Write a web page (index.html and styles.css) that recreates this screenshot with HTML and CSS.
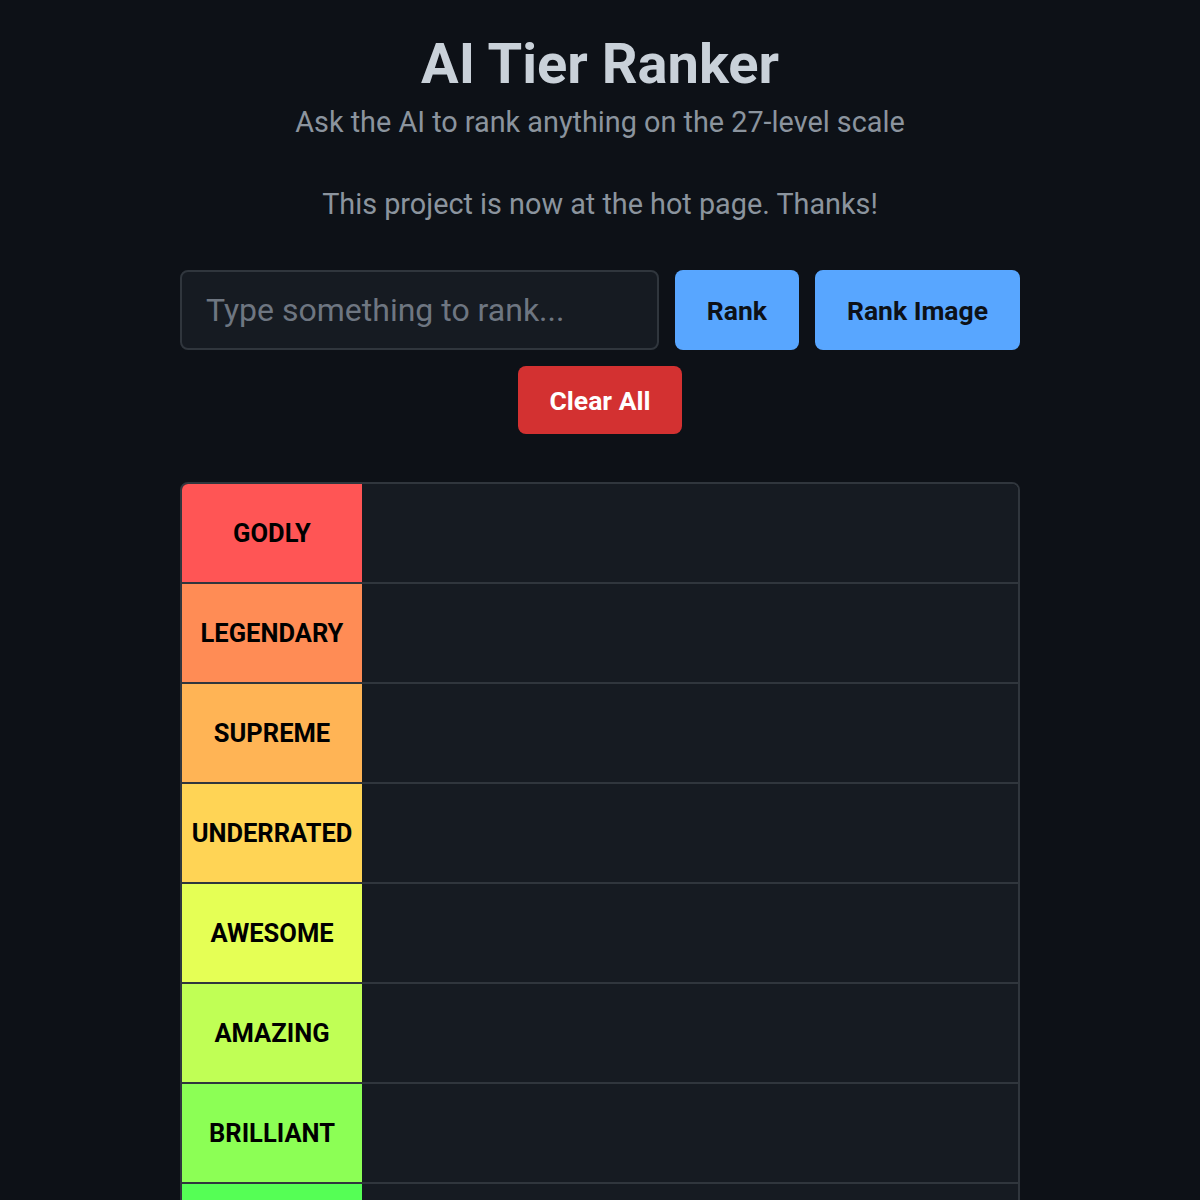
FILE: index.html
```html
<!DOCTYPE html>
<html>
<head>
    <title>AI Tier Ranker</title>
    <link rel="stylesheet" href="styles.css">
</head>
<body>
    <div class="container">
        <header class="header">
            <h1>AI Tier Ranker</h1>
            <p class="subtitle">Ask the AI to rank anything on the 27-level scale</p>
            <p class="notice">This project is now at the hot page. Thanks!</p>
        </header>

        <div class="controls">
            <input type="text" class="rank-input" placeholder="Type something to rank...">
            <button class="btn btn-primary">Rank</button>
            <button class="btn btn-primary">Rank Image</button>
        </div>
        <div class="clear-row">
            <button class="btn btn-danger">Clear All</button>
        </div>

        <div class="tier-list">
            <div class="tier">
                <div class="tier-label tier-godly">GODLY</div>
                <div class="tier-items"></div>
            </div>
            <div class="tier">
                <div class="tier-label tier-legendary">LEGENDARY</div>
                <div class="tier-items"></div>
            </div>
            <div class="tier">
                <div class="tier-label tier-supreme">SUPREME</div>
                <div class="tier-items"></div>
            </div>
            <div class="tier">
                <div class="tier-label tier-underrated">UNDERRATED</div>
                <div class="tier-items"></div>
            </div>
            <div class="tier">
                <div class="tier-label tier-awesome">AWESOME</div>
                <div class="tier-items"></div>
            </div>
            <div class="tier">
                <div class="tier-label tier-amazing">AMAZING</div>
                <div class="tier-items"></div>
            </div>
            <div class="tier">
                <div class="tier-label tier-brilliant">BRILLIANT</div>
                <div class="tier-items"></div>
            </div>
            <div class="tier">
                <div class="tier-label tier-great">GREAT</div>
                <div class="tier-items"></div>
            </div>
            <div class="tier">
                <div class="tier-label tier-good">GOOD</div>
                <div class="tier-items"></div>
            </div>
        </div>
    </div>
</body>
</html>
```

FILE: styles.css
```css
body {
    margin: 0;
    background-color: #0d1117;
    font-family: Roboto, 'Liberation Sans', sans-serif;
    color: #c9d1d9;
}

.container {
    width: 840px;
    margin: 0 auto;
    padding-bottom: 40px;
}

/* Header */
.header {
    padding-top: 31px;
    text-align: center;
}

h1 {
    margin: 0 0 7px;
    font-size: 56px;
    line-height: 1.2;
    font-weight: 700;
    color: #c9d1d9;
}

.subtitle,
.notice {
    margin: 0;
    font-size: 28.8px;
    line-height: 1.2;
    color: #8b949e;
}

.notice {
    margin-top: 47px;
}

/* Input + buttons */
.controls {
    display: flex;
    gap: 16px;
    margin-top: 49px;
    height: 80px;
}

.rank-input {
    flex: 1;
    min-width: 0;
    box-sizing: border-box;
    padding: 0 24px;
    font-family: Roboto, 'Liberation Sans', sans-serif;
    font-size: 32px;
    color: #c9d1d9;
    background-color: #161b22;
    border: 2px solid #30363d;
    border-radius: 8px;
    outline: none;
}

.rank-input::placeholder {
    color: #6e7681;
}

.btn {
    padding: 0 32px;
    font-family: Roboto, 'Liberation Sans', sans-serif;
    font-size: 26.5px;
    font-weight: 700;
    border: none;
    border-radius: 8px;
    cursor: pointer;
}

.btn-primary {
    background-color: #58a6ff;
    color: #0d1117;
}

.clear-row {
    display: flex;
    justify-content: center;
    margin-top: 16px;
}

.btn-danger {
    height: 68px;
    background-color: #d33131;
    color: #fff;
}

/* Tier list */
.tier-list {
    margin-top: 48px;
    border: 2px solid #30363d;
    border-radius: 8px;
    overflow: hidden;
}

.tier {
    display: flex;
    height: 100px;
    border-bottom: 2px solid #30363d;
    box-sizing: border-box;
}

.tier-label {
    width: 180px;
    display: flex;
    align-items: center;
    justify-content: center;
    font-size: 25.5px;
    font-weight: 700;
    color: #000;
}

.tier-items {
    flex: 1;
    background-color: #161b22;
}

.tier-godly { background-color: #ff5555; }
.tier-legendary { background-color: #ff8c55; }
.tier-supreme { background-color: #ffb455; }
.tier-underrated { background-color: #ffd455; }
.tier-awesome { background-color: #e5ff55; }
.tier-amazing { background-color: #c0ff55; }
.tier-brilliant { background-color: #8cff55; }
.tier-great { background-color: #55ff55; }
.tier-good { background-color: #55ff8c; }
```
